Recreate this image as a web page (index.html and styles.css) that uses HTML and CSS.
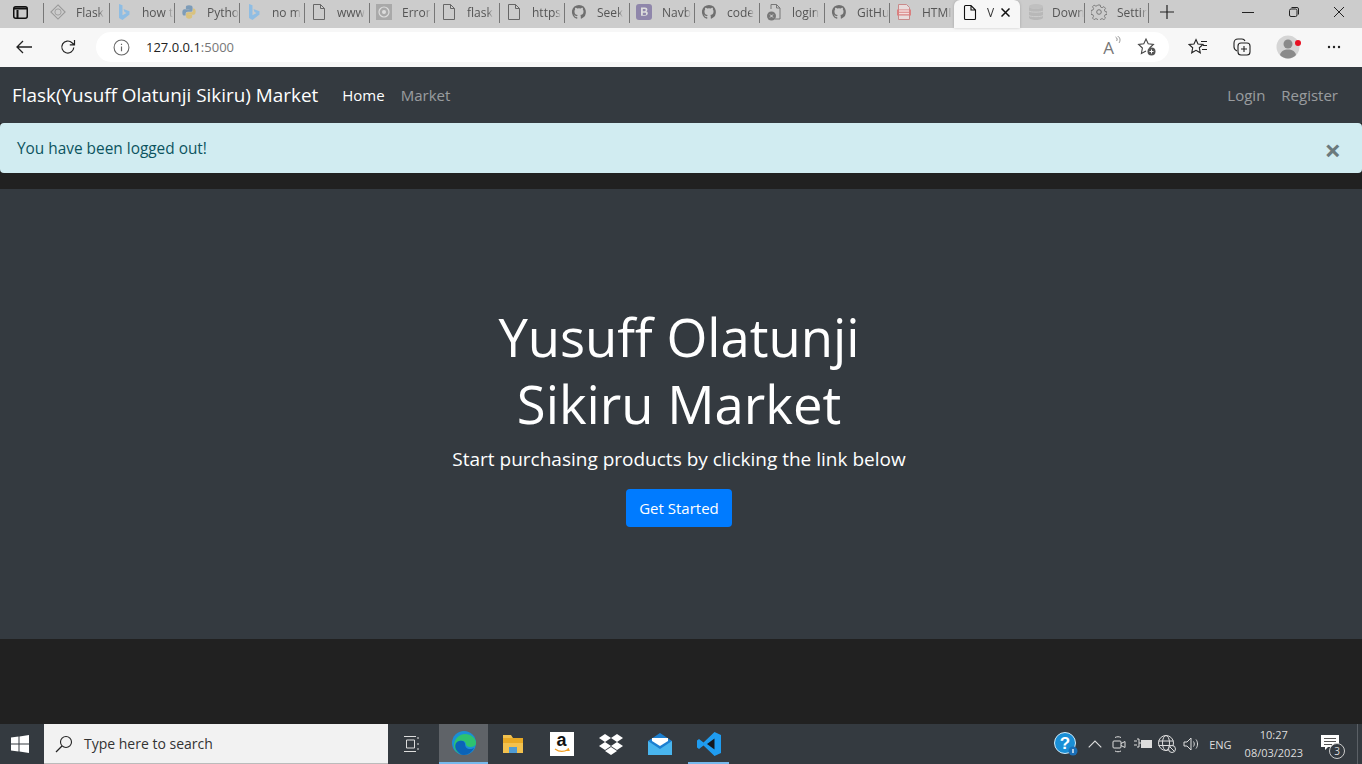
FILE: index.html
```html
<!DOCTYPE html>
<html lang="en">
<head>
    <meta charset="UTF-8">
    <meta name="viewport" content="width=device-width, initial-scale=1.0">
    <title>Yusuff Olatunji Sikiru Market</title>
    <link rel="stylesheet" href="styles.css">
</head>
<body>
    <svg class="defs" width="0" height="0">
        <symbol id="page" viewBox="0 0 16 18"><path d="M2.500 1.500h7l4 4v11h-11zM9.500 1.500v4h4" fill="none" stroke="currentColor" stroke-width="1"/></symbol>
        <symbol id="bing" viewBox="0 0 16 18"><path d="M3 1l3.500 1.200v10l4-2.200-2-1-1-3 6 2.200v3.300L6.500 17 3 15z" fill="#8fbde3"/></symbol>
        <symbol id="github" viewBox="0 0 18 18"><path d="M9 1a8 8 0 0 0-2.500 15.600c.4.100.5-.2.500-.4v-1.500c-2.200.5-2.700-1-2.700-1-.4-.9-.9-1.200-.9-1.200-.7-.5.100-.5.100-.5.800.1 1.200.8 1.200.8.700 1.200 1.900.9 2.300.7.100-.5.300-.9.500-1.100-1.800-.2-3.600-.9-3.600-4 0-.9.300-1.600.8-2.100-.1-.2-.4-1 .1-2.100 0 0 .7-.2 2.200.8a7.600 7.600 0 0 1 4 0c1.500-1 2.200-.8 2.200-.8.500 1.100.2 1.900.1 2.100.5.500.8 1.200.8 2.100 0 3.100-1.900 3.800-3.600 4 .3.200.5.700.5 1.500v2.200c0 .2.100.5.500.4A8 8 0 0 0 9 1z" fill="#6f6f6f"/></symbol>
    </svg>

    <div class="tabstrip">
        <div class="tab-menu">
            <svg width="15" height="13" viewBox="0 0 15 13"><rect x=".75" y=".75" width="13.500" height="11.500" rx="2" fill="none" stroke="#111" stroke-width="1.500"/><path d="M1 2.500h13M4.500 4v8" stroke="#111" stroke-width="2" fill="none"/></svg>
        </div>
        <div class="tab">
            <svg class="tab-icon" width="16" height="16" viewBox="0 0 18 18"><path d="M9 1l8 8-8 8-8-8z" fill="none" stroke="#999" stroke-width="1.200"/><circle cx="9" cy="9" r="3.500" fill="none" stroke="#999"/></svg>
            <span class="tab-label">Flask</span>
        </div>
        <div class="tab"><svg class="tab-icon" width="16" height="18"><use href="#bing"/></svg><span class="tab-label">how t</span></div>
        <div class="tab">
            <svg class="tab-icon" width="16" height="16" viewBox="0 0 18 18"><path d="M9 1.500c-3 0-3.500 1-3.500 2.500v1.500H9.500V6H3.800C2.500 6 1.500 7 1.500 9.500s1 3.500 2.200 3.500h1.500v-2c0-1.300 1-2.300 2.300-2.300h3.500c1.200 0 2-.9 2-2V4c0-1.500-1.300-2.500-4-2.500z" fill="#7d9cb8"/><path d="M9 16.500c3 0 3.500-1 3.500-2.500v-1.500H8.500V12h5.700c1.300 0 2.300-1 2.300-3.500S15.500 5 14.300 5h-.8v2c0 1.300-1 2.300-2.300 2.300H7.700c-1.200 0-2 .9-2 2V14c0 1.500 1.300 2.500 3.300 2.500z" fill="#d9c27e"/></svg>
            <span class="tab-label">Pytho</span>
        </div>
        <div class="tab"><svg class="tab-icon" width="16" height="18"><use href="#bing"/></svg><span class="tab-label">no m</span></div>
        <div class="tab"><svg class="tab-icon" width="16" height="18"><use href="#page"/></svg><span class="tab-label">www</span></div>
        <div class="tab">
            <svg class="tab-icon" width="16" height="16" viewBox="0 0 16 16"><rect width="16" height="16" fill="#a9a9a9"/><circle cx="8" cy="8" r="5" fill="none" stroke="#ddd" stroke-width="1.200"/><circle cx="8" cy="8" r="2" fill="#ddd"/></svg>
            <span class="tab-label">Error</span>
        </div>
        <div class="tab"><svg class="tab-icon" width="16" height="18"><use href="#page"/></svg><span class="tab-label">flask</span></div>
        <div class="tab"><svg class="tab-icon" width="16" height="18"><use href="#page"/></svg><span class="tab-label">https</span></div>
        <div class="tab"><svg class="tab-icon" width="16" height="16"><use href="#github"/></svg><span class="tab-label">Seek</span></div>
        <div class="tab">
            <svg class="tab-icon" width="16" height="16" viewBox="0 0 16 16"><rect width="16" height="16" rx="3" fill="#8f86ab"/><path d="M5 3.500h4c1.500 0 2.400.8 2.400 2 0 .9-.5 1.500-1.200 1.800 1 .2 1.600 1 1.600 2 0 1.500-1.100 2.400-2.800 2.400H5zM6.800 5v2.300h1.800c.8 0 1.100-.5 1.100-1.200S9.400 5 8.600 5zm0 3.700V11h2c.9 0 1.300-.4 1.300-1.200s-.5-1.100-1.300-1.100z" fill="#ddd"/></svg>
            <span class="tab-label">Navb</span>
        </div>
        <div class="tab"><svg class="tab-icon" width="16" height="16"><use href="#github"/></svg><span class="tab-label">code</span></div>
        <div class="tab">
            <svg class="tab-icon" width="16" height="18" viewBox="0 0 16 18"><path d="M5 6V1.500h5.500l3.500 3.500v11H9M10.500 1.500V5H14" fill="none" stroke="#777"/><circle cx="5.500" cy="13" r="4.500" fill="#777"/><path d="M4 11.500l3 3m0-3l-3 3" stroke="#ddd"/></svg>
            <span class="tab-label">login</span>
        </div>
        <div class="tab"><svg class="tab-icon" width="16" height="16"><use href="#github"/></svg><span class="tab-label">GitHu</span></div>
        <div class="tab">
            <svg class="tab-icon" width="16" height="18" viewBox="0 0 16 18"><path d="M2.500 1.500h8l3 3v12h-11z" fill="#e8dcdc" stroke="#c98a8a"/><rect x="1" y="6.500" width="14" height="6" fill="#d98080"/><path d="M3 8h10M3 10.500h10" stroke="#f3dddd" stroke-width="1.300"/></svg>
            <span class="tab-label">HTMI</span>
        </div>
        <div class="tab tab-active">
            <svg class="tab-icon" width="14" height="17" viewBox="0 0 14 17"><path d="M1.500 2.500a1 1 0 0 1 1-1h5.500l4.500 4.500v8.500a1 1 0 0 1-1 1h-9a1 1 0 0 1-1-1zM8 1.500V6h4.500" fill="none" stroke="#111" stroke-width="1.100"/></svg>
            <span class="tab-label">V</span>
            <svg class="tab-close" width="9" height="9" viewBox="0 0 9 9"><path d="M.5 .5l8 8m0-8l-8 8" stroke="#111" stroke-width="1.500"/></svg>
        </div>
        <div class="tab tab-down">
            <svg class="tab-icon tab-faded" width="16" height="18" viewBox="0 0 16 18"><ellipse cx="8" cy="3.500" rx="7" ry="2.500" fill="#bbb"/><path d="M1 3.500v11c0 1.400 3.100 2.500 7 2.500s7-1.100 7-2.500v-11c0 1.400-3.100 2.500-7 2.500S1 4.900 1 3.500z" fill="#b0b0b0"/><path d="M1 8c1 1.500 13 1.500 14 0M1 12.500c1 1.500 13 1.500 14 0" fill="none" stroke="#d0d0d0"/></svg>
            <span class="tab-label">Down</span>
        </div>
        <div class="tab tab-last">
            <svg class="tab-icon" width="16" height="16" viewBox="0 0 16 16"><circle cx="8" cy="8" r="2.300" fill="none" stroke="#777"/><path d="M6.800 1h2.400l.4 2 1.500.7 1.800-1.100 1.600 1.700-1.100 1.700.6 1.500 2 .5v2.400l-2 .4-.6 1.500 1.100 1.800-1.600 1.600-1.800-1.100-1.500.6-.4 2H6.800l-.4-2-1.500-.6-1.800 1.100-1.600-1.600 1.100-1.800-.6-1.500-2-.4V6.500l2-.5.600-1.500-1.100-1.700 1.600-1.700 1.800 1.100 1.500-.7z" fill="none" stroke="#777" stroke-width=".9"/></svg>
            <span class="tab-label">Settir</span>
        </div>
        <svg class="new-tab" width="14" height="14" viewBox="0 0 14 14"><path d="M7 0v14M0 7h14" stroke="#222" stroke-width="1.200"/></svg>
        <div class="window-controls">
            <svg width="12" height="10" viewBox="0 0 12 10"><path d="M0 5.500h12" stroke="#222"/></svg>
            <svg width="10" height="10" viewBox="0 0 10 10"><rect x=".5" y="2" width="7.500" height="7.500" rx="1.500" fill="none" stroke="#222"/><path d="M2.500 .5H8a1.500 1.500 0 0 1 1.500 1.500v5.500" fill="none" stroke="#222"/></svg>
            <svg width="10" height="10" viewBox="0 0 10 10"><path d="M0 0l10 10m0-10L0 10" stroke="#222"/></svg>
        </div>
    </div>

    <div class="toolbar">
        <svg class="tool-back" width="16" height="14" viewBox="0 0 16 14"><path d="M7 1L1 7l6 6M1 7h15" fill="none" stroke="#222" stroke-width="1.300"/></svg>
        <svg class="tool-reload" width="16" height="16" viewBox="0 0 16 16"><path d="M13.800 8.500A6 6 0 1 1 12 3.700L14 5.500M14.500 1v4.800H9.800" fill="none" stroke="#222" stroke-width="1.200"/></svg>
        <div class="omnibox">
            <svg class="info-icon" width="17" height="17" viewBox="0 0 16 16"><circle cx="8" cy="8" r="7" fill="none" stroke="#666"/><path d="M8 7v4.500M8 4.500v1.200" stroke="#666" stroke-width="1.100"/></svg>
            <span class="url">127.0.0.1<span class="url-port">:5000</span></span>
            <span class="omni-spacer"></span>
            <span class="read-aloud">A<svg width="7" height="10" viewBox="0 0 6 10"><path d="M1 1c2 1 2 3 1 4M3 0c3 1.500 3 5 1.500 7" fill="none" stroke="#777" stroke-width=".8"/></svg></span>
            <svg class="fav-add" width="20" height="20" viewBox="0 0 20 20"><path d="M12.600 11l3.800-3.600-5.200-.6L9 2 6.800 6.800l-5.200.6L5.400 11l-1 5.400L9 14" fill="none" stroke="#444" stroke-width="1.100"/><circle cx="14.500" cy="14.500" r="4" fill="#555"/><path d="M14.500 12.500v4M12.500 14.500h4" stroke="#fff"/></svg>
        </div>
        <svg class="tool-fav" width="20" height="18" viewBox="0 0 20 18"><path d="M8 1.500l2 4.500 5 .5-3.700 3.300 1 5-4.300-2.500-4.300 2.500 1-5L1 6.500l5-.5zM13 3.500h6M15 7.500h4M14 11.500h5" fill="none" stroke="#222" stroke-width="1.100"/></svg>
        <svg class="tool-coll" width="18" height="18" viewBox="0 0 18 18"><rect x="5" y="5" width="12" height="12" rx="3" fill="none" stroke="#222" stroke-width="1.100"/><path d="M11 8v6M8 11h6M4 13C2 12 1 11 1 9V5c0-2.500 1.500-4 4-4h4c1.500 0 2.500.8 3 2" fill="none" stroke="#222" stroke-width="1.100"/></svg>
        <div class="avatar">
            <svg width="24" height="24" viewBox="0 0 24 24"><circle cx="12" cy="12" r="11.500" fill="#d5d5d5"/><circle cx="12" cy="9" r="4.500" fill="#8a8a8a"/><path d="M4 20c1-4 4-5.500 8-5.500s7 1.500 8 5.500a11 11 0 0 1-16 0z" fill="#8a8a8a"/></svg>
            <span class="avatar-dot"></span>
        </div>
        <svg class="tool-more" width="14" height="4" viewBox="0 0 14 4"><circle cx="2" cy="2" r="1.200" fill="#222"/><circle cx="7" cy="2" r="1.200" fill="#222"/><circle cx="12" cy="2" r="1.200" fill="#222"/></svg>
    </div>

    <nav class="navbar">
        <a class="navbar-brand">Flask(Yusuff Olatunji Sikiru) Market</a>
        <a class="nav-link nav-active">Home</a>
        <a class="nav-link">Market</a>
        <span class="nav-spacer"></span>
        <a class="nav-link">Login</a>
        <a class="nav-link">Register</a>
    </nav>

    <div class="alert">
        <span>You have been logged out!</span>
        <span class="alert-close">&times;</span>
    </div>

    <main class="jumbotron">
        <h1>Yusuff Olatunji<br>Sikiru Market</h1>
        <p>Start purchasing products by clicking the link below</p>
        <a class="btn">Get Started</a>
    </main>

    <div class="page-rest"></div>

    <div class="taskbar">
        <svg class="start" width="18" height="18" viewBox="0 0 18 18"><path d="M0 2.600l7.500-1v7H0zM8.500 1.400L18 0v8.600H8.500zM0 9.500h7.500v7L0 15.400zM8.500 9.500H18V18l-9.500-1.400z" fill="#fff"/></svg>
        <div class="search-box">
            <svg width="18" height="18" viewBox="0 0 18 18"><circle cx="11" cy="7" r="5.500" fill="none" stroke="#222" stroke-width="1.100"/><path d="M7 11l-6 6" stroke="#222" stroke-width="1.200"/></svg>
            <span>Type here to search</span>
        </div>
        <div class="task-item task-view">
            <svg width="16" height="16" viewBox="0 0 16 16"><path d="M0 .5h12M0 15.500h12M2.500 4h8v8h-8zM14 1v2M14 7v2M14 12v2" fill="none" stroke="#ddd"/></svg>
        </div>
        <div class="task-item task-current">
            <svg width="26" height="26" viewBox="0 0 26 26"><circle cx="13" cy="13" r="12" fill="#1a8fd6"/><path d="M3 16C3 8 9 4 14 4c6 0 11 4 11 9 0 3-3 4-6 4-2 0-4-1-4-2.500 0-3-3-4.500-6-3.500-4 1.500-4 7-1 10 2 2 5 3 8 2.500C9 25 3 22 3 16z" fill="#2ec26f"/><path d="M6 21c-3-4-2-9 2-10 3-1 6 0 6 3 0 3 2 5 5 5 2 0 3-.5 4-1-2 4-6 7-10 7-3 0-5-2-7-4z" fill="#0b63b8"/></svg>
        </div>
        <div class="task-item">
            <svg width="24" height="22" viewBox="0 0 24 22"><path d="M2 2h8l2 3h10v15H2z" fill="#f2c14e"/><rect x="2" y="5" width="20" height="5" fill="#e8a925"/><rect x="8" y="14" width="8" height="6" fill="#4f9bd4"/></svg>
        </div>
        <div class="task-item">
            <div class="amazon">
                <span class="amazon-a">a</span>
                <svg width="16" height="5" viewBox="0 0 16 5"><path d="M1 1c4 3 9 3 13 .5M14 0l1 2.500-2.500 0" fill="none" stroke="#f29d1f" stroke-width="1.200"/></svg>
            </div>
        </div>
        <div class="task-item">
            <svg width="24" height="22" viewBox="0 0 24 22"><path d="M6 1l6 4-6 4-6-4zM18 1l6 4-6 4-6-4zM6 9l6 4-6 4-6-4zM18 9l6 4-6 4-6-4zM12 14l6 4-6 4-6-4z" fill="#fff"/></svg>
        </div>
        <div class="task-item">
            <svg width="24" height="22" viewBox="0 0 24 22"><path d="M0 8L12 0l12 8v14H0z" fill="#1c7fd0"/><path d="M0 8l12 8 12-8v14H0z" fill="#49b5ee"/><path d="M4 8V5h16v3l-8 5z" fill="#fff"/></svg>
        </div>
        <div class="task-item task-open">
            <svg width="26" height="26" viewBox="0 0 26 26"><path d="M18.500 1L25 4v18l-6.500 3-11-10.500L3 18l-2-1.500V9.500L3 8l4.500 3.500z" fill="#1f9cf0"/><path d="M18.500 7.500L11 13l7.500 5.500z" fill="#15171c"/></svg>
        </div>
        <span class="task-spacer"></span>
        <div class="tray">
            <svg class="tray-help" width="24" height="24" viewBox="0 0 24 24"><circle cx="11" cy="11" r="10.500" fill="#1a8fd6" stroke="#cfeaf9"/><text x="11" y="17" class="help-mark">?</text><circle cx="19" cy="19" r="4.500" fill="#1a6fb8"/><path d="M19 17v4" stroke="#fff" stroke-width="1.300"/></svg>
            <span class="tray-slot"><svg width="14" height="8" viewBox="0 0 12 7"><path d="M.5 6.500L6 1l5.500 5.500" fill="none" stroke="#ddd" stroke-width="1"/></svg></span>
            <span class="tray-slot"><svg width="14" height="18" viewBox="0 0 14 18"><rect x="1" y="6" width="8" height="7" rx="1" fill="none" stroke="#ddd"/><path d="M9 8.500L13 6.500v6L9 10.500M3 2.500c2-1 4-1 6 0M3 16c2 1 4 1 6 0" fill="none" stroke="#ddd"/></svg></span>
            <span class="tray-slot"><svg width="18" height="12" viewBox="0 0 18 12"><path d="M0 3h3M0 7h3M3 1h2v8H3M5 5h2" fill="none" stroke="#ddd"/><rect x="7" y="2" width="11" height="8" fill="#ddd"/></svg></span>
            <span class="tray-slot"><svg width="18" height="18" viewBox="0 0 18 18"><circle cx="8" cy="8" r="7.500" fill="none" stroke="#ddd"/><ellipse cx="8" cy="8" rx="3.500" ry="7.500" fill="none" stroke="#ddd"/><path d="M.5 6h15M.5 10.500h15" stroke="#ddd"/><circle cx="14" cy="14" r="3.500" fill="#343a40" stroke="#ddd"/><path d="M12 12l4 4" stroke="#ddd"/></svg></span>
            <span class="tray-slot"><svg width="17" height="14" viewBox="0 0 17 14"><path d="M1 5h3l4-4v12L4 9H1zM10.500 4.500c1 1.500 1 3.500 0 5M13 2.500c2 2.500 2 6.500 0 9" fill="none" stroke="#ddd"/></svg></span>
            <span class="tray-lang">ENG</span>
            <div class="clock"><span>10:27</span><span>08/03/2023</span></div>
            <div class="notif">
                <svg width="18" height="16" viewBox="0 0 18 16"><path d="M0 0h18v12H7l-3 3v-3H0z" fill="#fff"/><path d="M3 3.500h12M3 6.500h12M3 9.500h8" stroke="#555"/></svg>
                <span class="notif-count">3</span>
            </div>
        </div>
        <span class="show-desktop"></span>
    </div>
</body>
</html>
```

FILE: styles.css
```css
* { box-sizing: border-box; }
html, body { height: 100%; }
body {
    margin: 0;
    height: 764px;
    overflow: hidden;
    display: flex;
    flex-direction: column;
    background: #212121;
    font-family: 'Open Sans', 'Noto Sans', sans-serif;
    color: #fff;
}
.defs { position: absolute; }

/* browser tabs */
.tabstrip {
    height: 28px;
    padding-bottom: 4px;
    display: flex;
    align-items: center;
    background: #cccccc;
    color: #555;
    font-size: 12px;
}
.tab-menu { width: 43px; padding-left: 13px; display: flex; }
.tab {
    position: relative;
    width: 65px;
    height: 24px;
    padding-left: 7px;
    flex: none;
    display: flex;
    align-items: center;
    gap: 10px;
}
.tab::before {
    content: "";
    position: absolute;
    left: 0;
    top: 3px;
    height: 20px;
    width: 1px;
    background: #777;
}
.tab-menu + .tab { width: 66px; }
.tab-icon { flex: none; color: #666; }
.tab-label {
    overflow: hidden;
    white-space: nowrap;
    -webkit-mask-image: linear-gradient(to right, #000 80%, transparent);
    mask-image: linear-gradient(to right, #000 80%, transparent);
}
.tab-active {
    width: 66px;
    height: 28px;
    padding: 0 0 4px 9px;
    align-self: flex-start;
    border-radius: 6px 6px 0 0;
    background: #f7f7f7;
    color: #333;
    box-shadow: 0 0 3px rgba(0, 0, 0, .2);
}
.tab-active::before, .tab-down::before { display: none; }
.tab-active .tab-label { width: 8px; flex: none; }
.tab-close { margin-left: -4px; flex: none; }
.tab-down { width: 64px; padding-left: 8px; gap: 8px; }
.tab-faded { opacity: .7; }
.tab-last::after {
    content: "";
    position: absolute;
    right: 0;
    top: 3px;
    height: 20px;
    width: 1px;
    background: #777;
}
.new-tab { margin-left: 11px; flex: none; }
.window-controls {
    margin-left: auto;
    padding-right: 18px;
    display: flex;
    gap: 35px;
}

/* address bar row */
.toolbar {
    height: 39px;
    padding-bottom: 1px;
    display: flex;
    align-items: center;
    background: #f7f7f7;
    color: #222;
}
.tool-back { margin-left: 16px; }
.tool-reload { margin-left: 28px; }
.omnibox {
    width: 1073px;
    height: 30px;
    margin-left: 20px;
    padding: 0 12px 0 17px;
    display: flex;
    align-items: center;
    background: #fff;
    border-radius: 15px;
    font-size: 13px;
}
.url { margin-left: 16px; color: #222; }
.url-port { color: #777; }
.omni-spacer { flex: 1; }
.read-aloud { display: flex; color: #777; font-size: 17px; margin-right: 16px; }
.tool-fav { margin-left: 19px; }
.tool-coll { margin-left: 25px; }
.avatar { position: relative; margin-left: 25px; width: 24px; height: 24px; }
.avatar-dot {
    position: absolute;
    top: 5px;
    right: -1px;
    width: 6px;
    height: 6px;
    border-radius: 50%;
    background: #e81123;
}
.tool-more { margin-left: 27px; }

/* page nav */
.navbar {
    height: 56px;
    padding: 0 16px 0 12px;
    display: flex;
    align-items: center;
    background: #343a40;
}
.navbar-brand { font-size: 18.900px; color: #fff; margin-right: 16px; }
.nav-link { padding: 0 8px; font-size: 15px; color: rgba(255, 255, 255, .5); }
.nav-active { color: #fff; }
.nav-spacer { flex: 1; }

.alert {
    height: 50px;
    padding: 0 21px 0 17px;
    display: flex;
    align-items: center;
    justify-content: space-between;
    background: #d1ecf1;
    color: #0c5460;
    font-size: 15.400px;
    border-radius: 4px;
}
.alert-close { font-size: 29px; font-weight: 700; color: #6b7a7d; line-height: 1; padding-top: 2px; }

.jumbotron {
    height: 450px;
    margin-top: 16px;
    padding-top: 114px;
    padding-right: 4px;
    display: flex;
    flex-direction: column;
    align-items: center;
    background: #343a40;
    text-align: center;
}
.jumbotron h1 { margin: 0; font-size: 52.600px; font-weight: 400; line-height: 67px; }
.jumbotron p { margin: 7px 0 0; font-size: 19px; line-height: 30px; }
.btn {
    width: 106px;
    height: 38px;
    margin-top: 15px;
    display: flex;
    align-items: center;
    justify-content: center;
    background: #007bff;
    color: #fff;
    font-size: 15px;
    border-radius: 4px;
}
.page-rest { flex: 1; }

/* windows taskbar */
.taskbar {
    height: 40px;
    display: flex;
    align-items: center;
    background: #343a40;
    color: #ddd;
}
.start { margin-left: 11px; flex: none; }
.search-box {
    width: 344px;
    height: 40px;
    margin-left: 15px;
    padding-left: 11px;
    display: flex;
    align-items: center;
    gap: 11px;
    background: #f2f2f2;
    border-bottom: 1px solid #bbb;
    color: #333;
    font-size: 14px;
}
.task-item {
    position: relative;
    width: 49px;
    height: 40px;
    flex: none;
    display: flex;
    align-items: center;
    justify-content: center;
}
.task-view { width: 51px; padding-right: 4px; }
.task-current { background: #5f6368; border-bottom: 2px solid #76b9ed; }
.task-open::after {
    content: "";
    position: absolute;
    left: 4px;
    right: 4px;
    bottom: 0;
    height: 2px;
    background: #76b9ed;
}
.amazon {
    width: 24px;
    height: 24px;
    display: flex;
    flex-direction: column;
    align-items: center;
    background: #fff;
}
.amazon-a { height: 16px; font: 700 18px/16px 'Liberation Sans', sans-serif; color: #111; }
.task-spacer { flex: 1; }
.tray { display: flex; align-items: center; padding-right: 18px; }
.tray-help { margin-right: 5px; }
.tray-slot { width: 24px; display: flex; justify-content: center; }
.help-mark { font: 700 17px 'Liberation Sans', sans-serif; fill: #fff; text-anchor: middle; }
.tray-lang { font-size: 11px; margin-left: 6px; }
.clock {
    margin-left: 13px;
    display: flex;
    flex-direction: column;
    align-items: center;
    font-size: 11px;
    line-height: 18px;
}
.notif { position: relative; margin-left: 18px; width: 18px; height: 24px; padding-top: 2px; }
.notif-count {
    position: absolute;
    right: -6px;
    bottom: -3px;
    width: 16px;
    height: 16px;
    border: 1px solid #ccc;
    border-radius: 50%;
    background: #343a40;
    font-size: 10px;
    line-height: 14px;
    text-align: center;
}
.show-desktop { width: 5px; height: 40px; border-left: 1px solid #5b6066; }
```
